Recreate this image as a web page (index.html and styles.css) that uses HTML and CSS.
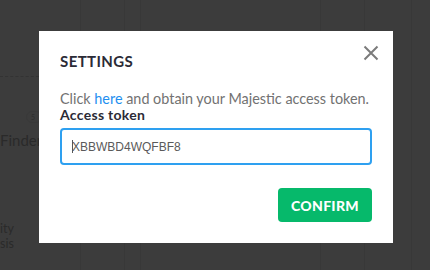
FILE: index.html
```html
<!DOCTYPE html>
<html lang="en">
<head>
<meta charset="utf-8">
<title>Settings</title>
<link rel="stylesheet" href="styles.css">
</head>
<body>
<div class="app">
  <div class="col col-a">
    <div class="dash"></div>
    <div class="badge">5</div>
    <div class="bg-title">Finder</div>
    <div class="bg-lines">
      <div class="bg-line">ity</div>
      <div class="bg-line">sis</div>
    </div>
  </div>
  <div class="col col-b"></div>
  <div class="col col-c"></div>
  <div class="col col-d"></div>
  <div class="col col-e"></div>
  <div class="col col-f"></div>
  <div class="col col-g"></div>
</div>

<div class="dialog" role="dialog" aria-labelledby="dlg-title">
  <button class="close" aria-label="Close">
    <svg width="16" height="16" viewBox="0 0 16 16" aria-hidden="true">
      <path d="M1.5 1.5 L14.5 14.5 M14.5 1.5 L1.5 14.5" stroke="#7b7b7b" stroke-width="2" fill="none" stroke-linecap="butt"/>
    </svg>
  </button>
  <h2 class="dlg-title" id="dlg-title">SETTINGS</h2>
  <p class="hint">Click <a class="link" href="#">here</a> and obtain your Majestic access token.</p>
  <label class="label">Access token</label>
  <div class="input"><span class="caret"></span>XBBWBD4WQFBF8</div>
  <div class="actions">
    <button class="confirm">CONFIRM</button>
  </div>
</div>
</body>
</html>
```

FILE: styles.css
```css
* { box-sizing: border-box; }

html, body {
  margin: 0;
  padding: 0;
  width: 430px;
  height: 270px;
  overflow: hidden;
  background: #3c3c3c;
  font-family: Lato, "Noto Sans", sans-serif;
}

.app {
  display: flex;
  height: 270px;
}

.col {
  height: 100%;
  border-right: 1px solid #383838;
}
.col-a { width: 81px; }
.col-b { width: 44px; }
.col-c { width: 16px; }
.col-d { width: 180px; }
.col-e { width: 44px; }
.col-f { width: 47px; }
.col-g { flex: 1; border-right: none; }

.dash {
  margin-top: 76px;
  border-top: 1px dashed #333333;
}

.badge {
  margin: 34px 0 0 26px;
  width: 16px;
  height: 12px;
  border: 1px solid #393939;
  border-radius: 6px;
  font-size: 7px;
  line-height: 10px;
  color: #2e2e2e;
  padding-left: 4px;
}

.bg-title {
  margin-top: 8px;
  font-size: 15px;
  line-height: 18px;
  color: #2a2a2a;
}

.bg-lines {
  margin-top: 72px;
}

.bg-line {
  font-size: 12.5px;
  line-height: 15px;
  height: 15px;
  color: #2a2a2a;
}

.dialog {
  position: absolute;
  left: 39px;
  top: 31px;
  width: 354px;
  height: 212px;
  background: #ffffff;
  padding: 20px 21px 20px;
}

.close {
  position: absolute;
  top: 14px;
  right: 14px;
  width: 16px;
  height: 16px;
  padding: 0;
  border: none;
  background: none;
  display: block;
}
.close svg { display: block; }

.dlg-title {
  margin: 0;
  font-size: 15px;
  line-height: 21px;
  font-weight: 700;
  letter-spacing: 0.4px;
  color: #2b2b36;
}

.hint {
  margin: 19px 0 0;
  font-size: 14.4px;
  line-height: 16px;
  white-space: nowrap;
  color: #727272;
}

.link {
  color: #1f8ff0;
  text-decoration: none;
}

.label {
  display: block;
  font-size: 14px;
  line-height: 16px;
  font-weight: 700;
  letter-spacing: 0.3px;
  color: #2b2b36;
}

.input {
  margin-top: 5px;
  height: 37px;
  border: 2px solid #2ea0f0;
  border-radius: 4px;
  padding-left: 10px;
  display: flex;
  align-items: center;
  font-family: "Liberation Sans", Arial, sans-serif;
  font-size: 12px;
  color: #5a5a5a;
}

.caret {
  display: inline-block;
  width: 1px;
  height: 13px;
  background: #555555;
  margin-right: -1px;
}

.actions {
  margin-top: 23px;
  display: flex;
  justify-content: flex-end;
}

.confirm {
  width: 94px;
  height: 34px;
  border: none;
  border-radius: 4px;
  background: #06b96b;
  color: #ffffff;
  font-family: Lato, "Noto Sans", sans-serif;
  font-size: 14px;
  font-weight: 900;
  letter-spacing: 0.3px;
  padding: 0;
}
```
